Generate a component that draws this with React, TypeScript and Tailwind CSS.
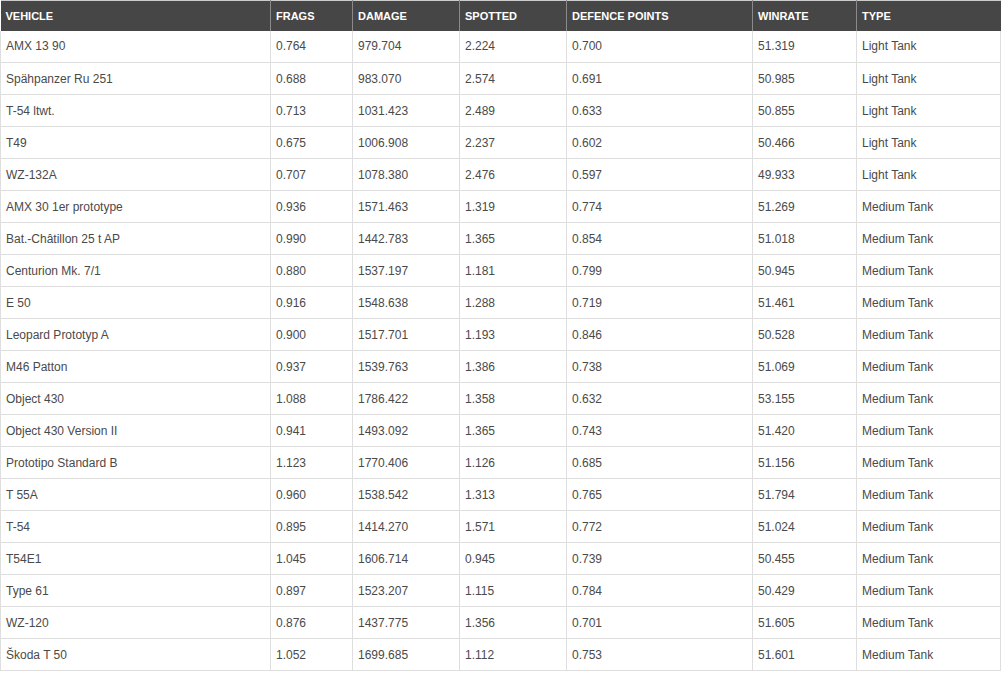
const columns = [
  { label: "VEHICLE", width: "w-[270px]" },
  { label: "FRAGS", width: "w-[82px]" },
  { label: "DAMAGE", width: "w-[107px]" },
  { label: "SPOTTED", width: "w-[107px]" },
  { label: "DEFENCE POINTS", width: "w-[186px]" },
  { label: "WINRATE", width: "w-[104px]" },
  { label: "TYPE", width: "w-[144px]" },
];

const rows: string[][] = [
  ["AMX 13 90", "0.764", "979.704", "2.224", "0.700", "51.319", "Light Tank"],
  ["Spähpanzer Ru 251", "0.688", "983.070", "2.574", "0.691", "50.985", "Light Tank"],
  ["T-54 ltwt.", "0.713", "1031.423", "2.489", "0.633", "50.855", "Light Tank"],
  ["T49", "0.675", "1006.908", "2.237", "0.602", "50.466", "Light Tank"],
  ["WZ-132A", "0.707", "1078.380", "2.476", "0.597", "49.933", "Light Tank"],
  ["AMX 30 1er prototype", "0.936", "1571.463", "1.319", "0.774", "51.269", "Medium Tank"],
  ["Bat.-Châtillon 25 t AP", "0.990", "1442.783", "1.365", "0.854", "51.018", "Medium Tank"],
  ["Centurion Mk. 7/1", "0.880", "1537.197", "1.181", "0.799", "50.945", "Medium Tank"],
  ["E 50", "0.916", "1548.638", "1.288", "0.719", "51.461", "Medium Tank"],
  ["Leopard Prototyp A", "0.900", "1517.701", "1.193", "0.846", "50.528", "Medium Tank"],
  ["M46 Patton", "0.937", "1539.763", "1.386", "0.738", "51.069", "Medium Tank"],
  ["Object 430", "1.088", "1786.422", "1.358", "0.632", "53.155", "Medium Tank"],
  ["Object 430 Version II", "0.941", "1493.092", "1.365", "0.743", "51.420", "Medium Tank"],
  ["Prototipo Standard B", "1.123", "1770.406", "1.126", "0.685", "51.156", "Medium Tank"],
  ["T 55A", "0.960", "1538.542", "1.313", "0.765", "51.794", "Medium Tank"],
  ["T-54", "0.895", "1414.270", "1.571", "0.772", "51.024", "Medium Tank"],
  ["T54E1", "1.045", "1606.714", "0.945", "0.739", "50.455", "Medium Tank"],
  ["Type 61", "0.897", "1523.207", "1.115", "0.784", "50.429", "Medium Tank"],
  ["WZ-120", "0.876", "1437.775", "1.356", "0.701", "51.605", "Medium Tank"],
  ["Škoda T 50", "1.052", "1699.685", "1.112", "0.753", "51.601", "Medium Tank"],
];

export default function App() {
  return (
    <div className="bg-white min-h-screen" style={{ fontFamily: '"Liberation Sans", Arial, sans-serif' }}>
      <table className="w-[1000px] table-fixed border-collapse border-t border-[#ccc]">
        <thead>
          <tr className="bg-[#464646] h-[30px]">
            {columns.map((col) => (
              <th
                key={col.label}
                className={`${col.width} border-l border-[#8a8a8a] first:border-l-0 px-[5px] text-left align-middle text-[11px] font-bold text-white`}
              >
                {col.label}
              </th>
            ))}
          </tr>
        </thead>
        <tbody>
          {rows.map((row) => (
            <tr key={row[0]} className="h-[32px] border-b border-[#dedede]">
              {row.map((cell, i) => (
                <td
                  key={i}
                  className="border-l border-r border-[#dedede] px-[5px] align-middle text-[12px] text-[#4a4a4a] whitespace-nowrap"
                >
                  {cell}
                </td>
              ))}
            </tr>
          ))}
        </tbody>
      </table>
    </div>
  );
}
